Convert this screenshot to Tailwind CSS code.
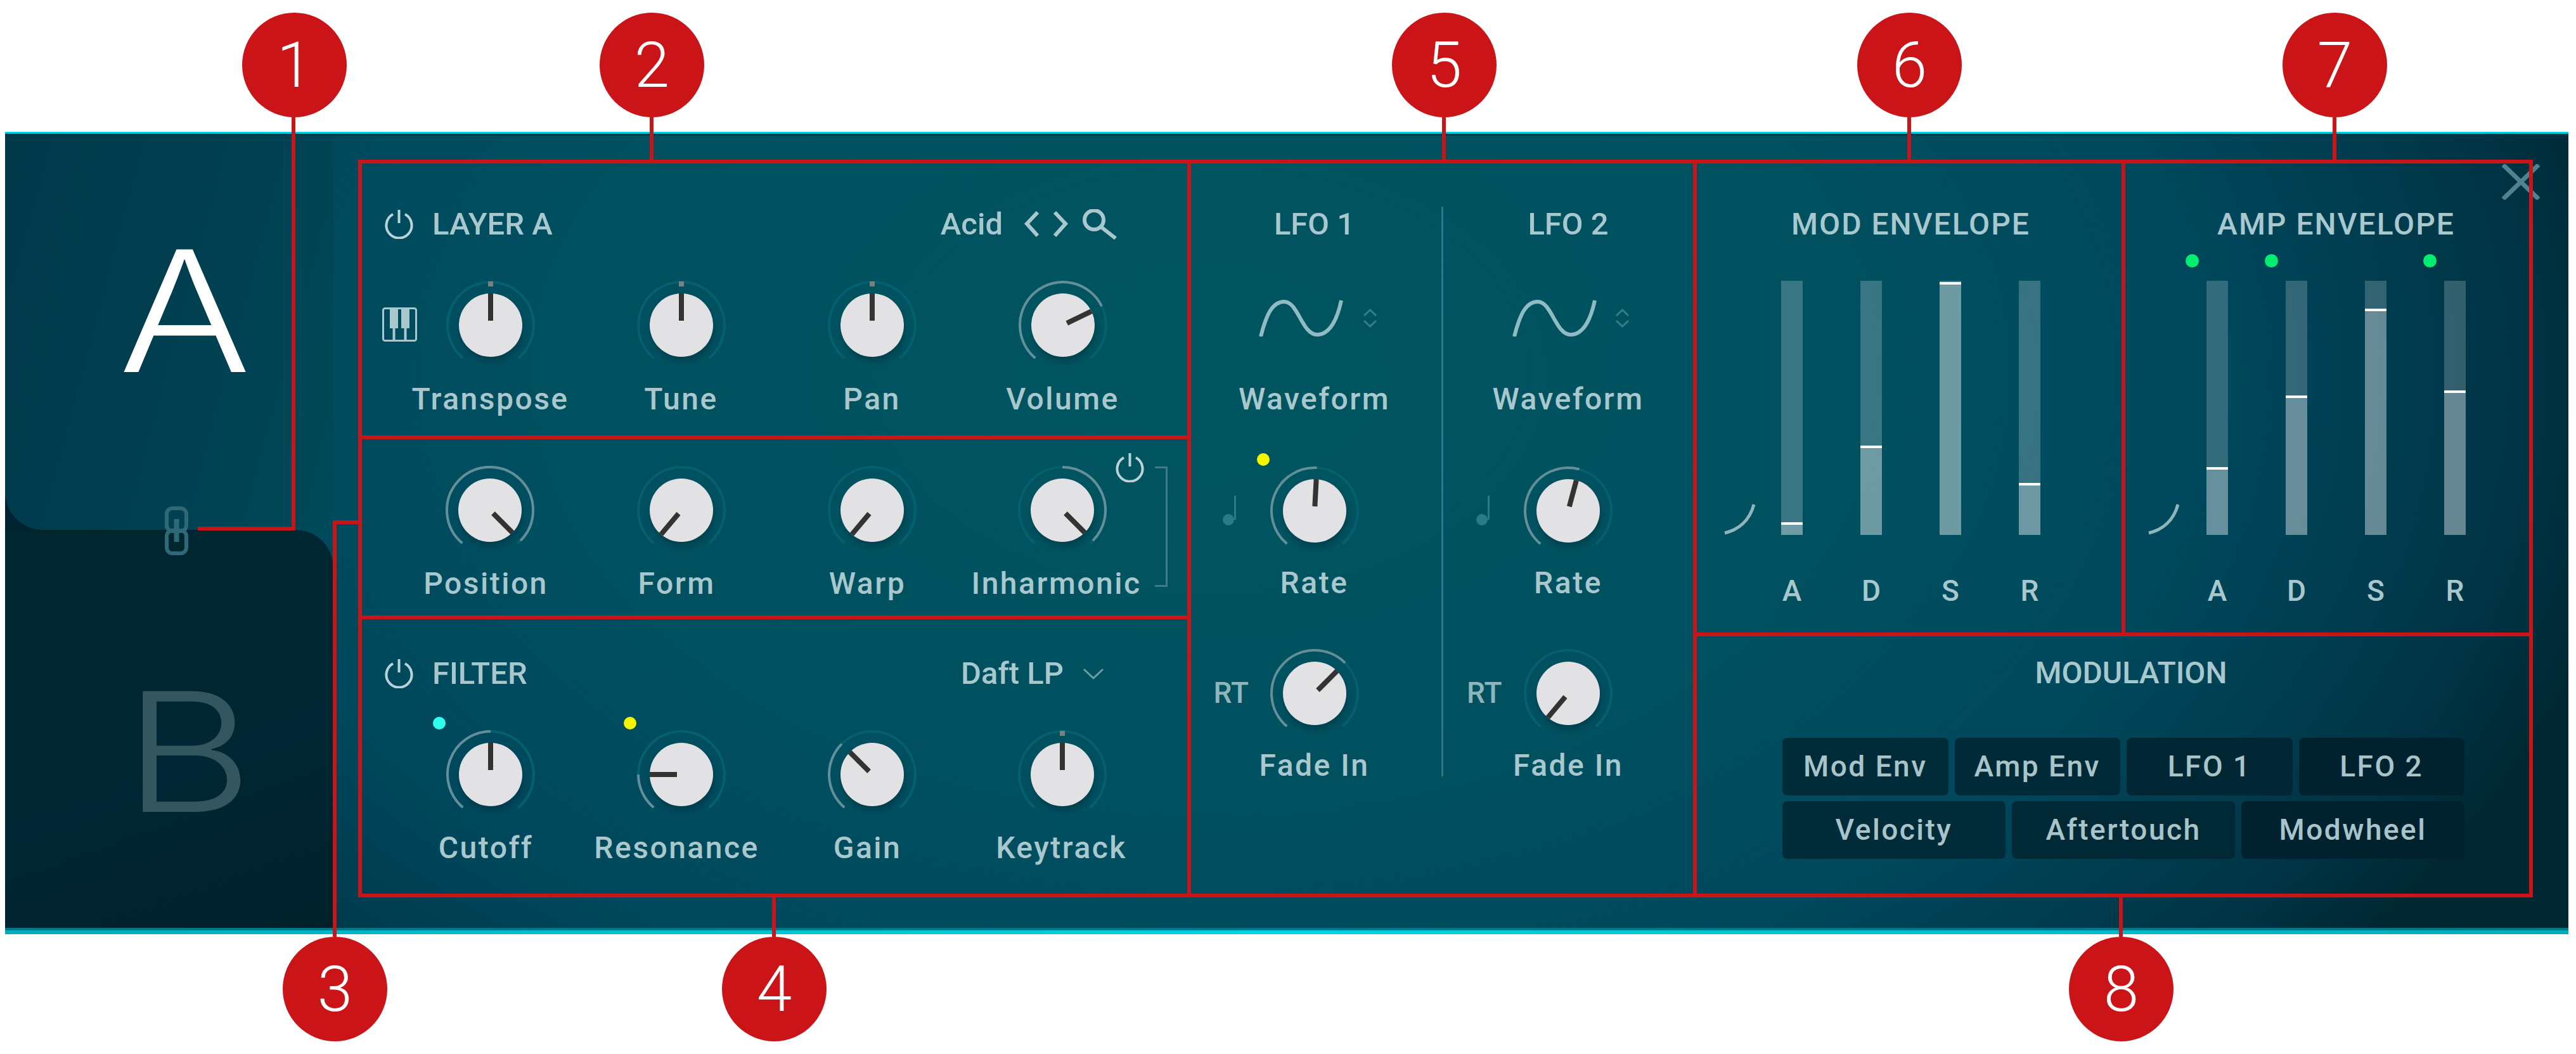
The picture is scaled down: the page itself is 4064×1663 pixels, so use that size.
<!DOCTYPE html>
<html lang="en">
  <head>
    <meta charset="UTF-8" />
    <title>Layer panel</title>
    <script src="https://cdn.jsdelivr.net/npm/@tailwindcss/browser@4"></script>
  </head>
  <body class="bg-white font-['Roboto',sans-serif] font-medium text-[#a9c8cd]">
    <div class="relative w-[4064px] h-[1663px] overflow-hidden pt-[208px] pl-[8px]">
      <!-- Panel -->
      <div class="relative flex w-[4044px] h-[1266px] border-t-[3px] border-t-[#00cfe0] bg-[radial-gradient(ellipse_2300px_1500px_at_1900px_380px,#00555f_0%,#005060_45%,#00475c_70%,#003242_92%,#00262f_100%)]">
        <!-- Edge strips -->
        <div class="absolute inset-x-0 top-0 h-[3px] bg-[#003844] z-[5]"></div>
        <div class="absolute inset-x-0 bottom-0 z-[5]">
          <div class="h-[4px] bg-[#00788a]"></div>
          <div class="h-[6px] bg-[linear-gradient(90deg,#00acc0,#00d4e4_50%,#00acc0)]"></div>
        </div>
        <!-- Close -->
        <svg class="absolute left-[3939px] top-[48px]" width="60" height="56" viewBox="0 0 60 56" fill="none" stroke="#4f8390" stroke-width="7">
          <path d="M2 1 L58 55 M58 1 L2 55" />
        </svg>

        <!-- Left: layer tabs -->
        <div class="w-[518px] flex flex-col shrink-0">
          <div class="relative w-[518px] h-[625px]">
            <div class="absolute left-0 bottom-0 w-[70px] h-[70px] bg-[#00242f]"></div>
            <div class="absolute inset-0 rounded-bl-[60px] bg-[linear-gradient(105deg,#00384a_0%,#003f50_50%,#004a5a_100%)] flex justify-center">
              <span class="mt-[119px] ml-[50px] scale-x-[1.17] text-[266px] leading-[320px] font-light text-white font-['Inter',sans-serif]">A</span>
            </div>
            <svg class="absolute left-[252px] top-[588px] z-10" width="37" height="77" viewBox="0 0 37 77" fill="none" stroke="#2f6877" stroke-width="6">
              <rect x="3" y="3" width="31" height="36" rx="9" />
              <rect x="3" y="38" width="31" height="36" rx="9" />
              <path d="M18.5 20 L18.5 56" stroke-width="8" />
            </svg>
          </div>
          <div class="flex-1 rounded-tr-[60px] bg-[linear-gradient(160deg,#00262f_0%,#002733_60%,#001f29_100%)] flex justify-center">
            <span class="mt-[190px] ml-[60px] scale-x-[1.2] text-[262px] leading-[320px] font-light text-[#33565f] font-['Inter',sans-serif]">B</span>
          </div>
        </div>

        <!-- Sections -->
        <div class="relative z-10 ml-[39px] mt-[41px] flex w-[3431px] h-[1164px] border-[6px] border-[#ca1417]">
          <!-- Layer, oscillator, filter -->
          <div class="w-[1308px] border-r-[6px] border-[#ca1417] flex flex-col shrink-0">
            <section class="h-[435px] border-b-[6px] border-[#ca1417] pt-[72px]">
              <div class="flex items-center h-[47px] pl-[36px] pr-[110px]">
                <svg data-power width="45" height="47"></svg>
                <span class="ml-[30px] text-[49px] leading-[47px]">LAYER A</span>
                <span class="ml-auto text-[49px] leading-[47px]">Acid</span>
                <svg class="ml-[33px]" width="71" height="44" viewBox="0 0 71 44" fill="none" stroke="#a9c8cd" stroke-width="6">
                  <path d="M22 3 L5 21 L22 40 M49 3 L66 21 L49 40" />
                </svg>
                <svg class="ml-[21px]" width="56" height="48" viewBox="0 0 56 48" fill="none" stroke="#a9c8cd" stroke-width="6">
                  <circle cx="19" cy="17" r="15" />
                  <path d="M30 28 L53 46" />
                </svg>
              </div>
              <div class="grid grid-cols-4 w-[1204px] ml-[52px] mt-[61px] justify-items-center">
                <div class="flex flex-col items-center">
                  <div class="relative">
                    <svg class="absolute left-[-96px] top-[47px]" width="55" height="54" viewBox="0 0 55 54" fill="none" stroke="#a9c8cd" stroke-width="3">
                      <rect x="1.5" y="1.5" width="52" height="51" rx="3" />
                      <path d="M18.500 30 L18.500 52 M36.500 30 L36.500 52" stroke-width="4" />
                      <path d="M12 2 H25 V33 H12 Z M30 2 H43 V33 H30 Z" fill="#a9c8cd" stroke="none" />
                    </svg>
                    <svg data-knob="0" data-bipolar width="150" height="150"></svg>
                  </div>
                  <span class="mt-[14px] text-[48px] leading-[56px] tracking-[2.5px]">Transpose</span>
                </div>
                <div class="flex flex-col items-center">
                  <svg data-knob="0" data-bipolar width="150" height="150"></svg>
                  <span class="mt-[14px] text-[48px] leading-[56px] tracking-[2.5px]">Tune</span>
                </div>
                <div class="flex flex-col items-center">
                  <svg data-knob="0" data-bipolar width="150" height="150"></svg>
                  <span class="mt-[14px] text-[48px] leading-[56px] tracking-[2.5px]">Pan</span>
                </div>
                <div class="flex flex-col items-center">
                  <svg data-knob="64" width="150" height="150"></svg>
                  <span class="mt-[14px] text-[48px] leading-[56px] tracking-[2.5px]">Volume</span>
                </div>
              </div>
            </section>

            <section class="relative h-[284px] border-b-[6px] border-[#ca1417] pt-[37px]">
              <div class="grid grid-cols-4 w-[1204px] ml-[52px] justify-items-center">
                <div class="flex flex-col items-center">
                  <svg data-knob="135" width="150" height="150"></svg>
                  <span class="mt-[13px] -ml-[14px] text-[48px] leading-[56px] tracking-[2.5px]">Position</span>
                </div>
                <div class="flex flex-col items-center">
                  <svg data-knob="-140" width="150" height="150"></svg>
                  <span class="mt-[13px] -ml-[14px] text-[48px] leading-[56px] tracking-[2.5px]">Form</span>
                </div>
                <div class="flex flex-col items-center">
                  <svg data-knob="-140" width="150" height="150"></svg>
                  <span class="mt-[13px] -ml-[14px] text-[48px] leading-[56px] tracking-[2.5px]">Warp</span>
                </div>
                <div class="flex flex-col items-center">
                  <svg data-knob="135" data-bipolar width="150" height="150"></svg>
                  <span class="mt-[13px] -ml-[20px] text-[48px] leading-[56px] tracking-[2.5px]">Inharmonic</span>
                </div>
              </div>
              <svg data-power class="absolute left-[1189px] top-[21px]" width="45" height="47"></svg>
              <div class="absolute left-[1251px] top-[43px] w-[20px] h-[190px] border-t-[3px] border-r-[3px] border-b-[3px] border-[#3f7a88]"></div>
            </section>

            <section class="flex-1 pt-[62px]">
              <div class="flex items-center h-[47px] pl-[36px] pr-[131px]">
                <svg data-power width="45" height="47"></svg>
                <span class="ml-[30px] text-[49px] leading-[47px]">FILTER</span>
                <span class="ml-auto text-[49px] leading-[47px]">Daft LP</span>
                <svg class="ml-[30px]" width="34" height="20" viewBox="0 0 34 20" fill="none" stroke="#6f9da6" stroke-width="3">
                  <path d="M2 3 L17 17 L32 3" />
                </svg>
              </div>
              <div class="grid grid-cols-4 w-[1204px] ml-[52px] mt-[61px] justify-items-center">
                <div class="flex flex-col items-center">
                  <div class="relative">
                    <span class="absolute -left-4 -top-4 w-5 h-5 rounded-full bg-[#2cfff0]"></span>
                    <svg data-knob="0" width="150" height="150"></svg>
                  </div>
                  <span class="mt-[13px] -ml-[14px] text-[48px] leading-[56px] tracking-[2.5px]">Cutoff</span>
                </div>
                <div class="flex flex-col items-center">
                  <div class="relative">
                    <span class="absolute -left-4 -top-4 w-5 h-5 rounded-full bg-[#f5f500]"></span>
                    <svg data-knob="-90" width="150" height="150"></svg>
                  </div>
                  <span class="mt-[13px] -ml-[14px] text-[48px] leading-[56px] tracking-[2.5px]">Resonance</span>
                </div>
                <div class="flex flex-col items-center">
                  <svg data-knob="-45" width="150" height="150"></svg>
                  <span class="mt-[13px] -ml-[14px] text-[48px] leading-[56px] tracking-[2.5px]">Gain</span>
                </div>
                <div class="flex flex-col items-center">
                  <svg data-knob="0" data-bipolar width="150" height="150"></svg>
                  <span class="mt-[13px] -ml-[4px] text-[48px] leading-[56px] tracking-[2.5px]">Keytrack</span>
                </div>
              </div>
            </section>
          </div>

          <!-- LFOs -->
          <div class="w-[798px] border-r-[6px] border-[#ca1417] flex shrink-0">
            <section class="w-[395px] pt-[72px] flex flex-col items-center pr-[6px]">
              <span class="text-[49px] leading-[47px]">LFO 1</span>
              <div class="relative mt-[96px] h-[58px] -ml-[42px]">
                <svg data-sine width="133" height="58"></svg>
                <svg data-stepper class="absolute left-[163px] top-[13px]" width="25" height="32"></svg>
              </div>
              <span class="mt-[71px] text-[48px] leading-[56px] tracking-[2.5px]">Waveform</span>
              <div class="relative mt-[73px]">
                <span class="absolute -left-4 -top-4 w-5 h-5 rounded-full bg-[#f5f500]"></span>
                <svg data-note class="absolute left-[-70px] top-[51px]" width="21" height="47"></svg>
                <svg data-knob="3" width="150" height="150"></svg>
              </div>
              <span class="mt-[11px] text-[48px] leading-[56px] tracking-[2.5px]">Rate</span>
              <div class="relative mt-[71px]">
                <span class="absolute left-[-84px] top-[51px] text-[46px] leading-[46px] text-[#8fb5bc]">RT</span>
                <svg data-knob="45" width="150" height="150"></svg>
              </div>
              <span class="mt-[11px] text-[48px] leading-[56px] tracking-[2.5px]">Fade In</span>
            </section>
            <div class="w-[3px] h-[899px] mt-[68px] bg-[#2d7888]"></div>
            <section class="w-[394px] pt-[72px] flex flex-col items-center">
              <span class="text-[49px] leading-[47px]">LFO 2</span>
              <div class="relative mt-[96px] h-[58px] -ml-[44px]">
                <svg data-sine width="133" height="58"></svg>
                <svg data-stepper class="absolute left-[161px] top-[13px]" width="25" height="32"></svg>
              </div>
              <span class="mt-[71px] text-[48px] leading-[56px] tracking-[2.5px]">Waveform</span>
              <div class="relative mt-[73px]">
                <svg data-note class="absolute left-[-70px] top-[51px]" width="21" height="47"></svg>
                <svg data-knob="15" width="150" height="150"></svg>
              </div>
              <span class="mt-[11px] text-[48px] leading-[56px] tracking-[2.5px]">Rate</span>
              <div class="relative mt-[71px]">
                <span class="absolute left-[-85px] top-[51px] text-[46px] leading-[46px] text-[#8fb5bc]">RT</span>
                <svg data-knob="-140" width="150" height="150"></svg>
              </div>
              <span class="mt-[11px] text-[48px] leading-[56px] tracking-[2.5px]">Fade In</span>
            </section>
          </div>

          <!-- Envelopes + modulation -->
          <div class="flex-1 flex flex-col">
            <div class="flex h-[746px] border-b-[6px] border-[#ca1417]">
              <section class="w-[676px] border-r-[6px] border-[#ca1417] pt-[72px] pl-[133px]">
                <div class="w-[409px] text-center text-[48px] leading-[47px] tracking-[2px] whitespace-nowrap">MOD ENVELOPE</div>
                <div class="w-[409px] h-[401px] mt-[66px] flex justify-between">
                  <div class="relative w-[34px] h-full bg-white/22">
                    <svg data-curve class="absolute left-[-90px] top-[351px]" width="50" height="50"></svg>
                    <div class="absolute inset-x-0 bottom-0 h-[20px] bg-white/27 border-t-[4px] border-white"></div>
                  </div>
                  <div class="relative w-[34px] h-full bg-white/22">
                    <div class="absolute inset-x-0 bottom-0 h-[141px] bg-white/27 border-t-[4px] border-white"></div>
                  </div>
                  <div class="relative w-[34px] h-full bg-white/22">
                    <div class="absolute inset-x-0 bottom-0 h-[399px] bg-white/27 border-t-[4px] border-white"></div>
                  </div>
                  <div class="relative w-[34px] h-full bg-white/22">
                    <div class="absolute inset-x-0 bottom-0 h-[82px] bg-white/27 border-t-[4px] border-white"></div>
                  </div>
                </div>
                <div class="w-[409px] mt-[63px] flex justify-between text-[46px] leading-[50px] text-center">
                  <span class="w-[34px]">A</span><span class="w-[34px]">D</span><span class="w-[34px]">S</span><span class="w-[34px]">R</span>
                </div>
              </section>
              <section class="flex-1 pt-[72px] pl-[128px]">
                <div class="w-[409px] text-center text-[48px] leading-[47px] tracking-[2px] whitespace-nowrap">AMP ENVELOPE</div>
                <div class="w-[409px] h-[401px] mt-[66px] flex justify-between">
                  <div class="relative w-[34px] h-full bg-white/20">
                    <span class="absolute left-[-33px] top-[-42px] w-[21px] h-[21px] rounded-full bg-[#00ee70]"></span>
                    <svg data-curve class="absolute left-[-92px] top-[351px]" width="50" height="50"></svg>
                    <div class="absolute inset-x-0 bottom-0 h-[107px] bg-white/25 border-t-[4px] border-white"></div>
                  </div>
                  <div class="relative w-[34px] h-full bg-white/20">
                    <span class="absolute left-[-33px] top-[-42px] w-[21px] h-[21px] rounded-full bg-[#00ee70]"></span>
                    <div class="absolute inset-x-0 bottom-0 h-[220px] bg-white/25 border-t-[4px] border-white"></div>
                  </div>
                  <div class="relative w-[34px] h-full bg-white/20">
                    <div class="absolute inset-x-0 bottom-0 h-[357px] bg-white/25 border-t-[4px] border-white"></div>
                  </div>
                  <div class="relative w-[34px] h-full bg-white/20">
                    <span class="absolute left-[-33px] top-[-42px] w-[21px] h-[21px] rounded-full bg-[#00ee70]"></span>
                    <div class="absolute inset-x-0 bottom-0 h-[228px] bg-white/25 border-t-[4px] border-white"></div>
                  </div>
                </div>
                <div class="w-[409px] mt-[63px] flex justify-between text-[46px] leading-[50px] text-center">
                  <span class="w-[34px]">A</span><span class="w-[34px]">D</span><span class="w-[34px]">S</span><span class="w-[34px]">R</span>
                </div>
              </section>
            </div>
            <section class="flex-1 pt-[33px] pl-[135px]">
              <div class="w-[1076px] pl-[24px] text-center text-[48px] leading-[50px]">MODULATION</div>
              <div class="w-[1076px] mt-[77px] flex flex-col gap-[9px] text-[46px] tracking-[2.5px] text-[#a9c4c9]">
                <div class="grid grid-cols-4 gap-[10px] h-[91px]">
                  <div class="rounded-lg bg-[#002c3a] flex items-center justify-center">Mod Env</div>
                  <div class="rounded-lg bg-[#002a38] flex items-center justify-center">Amp Env</div>
                  <div class="rounded-lg bg-[#002733] flex items-center justify-center">LFO 1</div>
                  <div class="rounded-lg bg-[#00222e] flex items-center justify-center">LFO 2</div>
                </div>
                <div class="grid grid-cols-3 gap-[10px] h-[91px]">
                  <div class="rounded-lg bg-[#002c3a] flex items-center justify-center">Velocity</div>
                  <div class="rounded-lg bg-[#002935] flex items-center justify-center">Aftertouch</div>
                  <div class="rounded-lg bg-[#00222e] flex items-center justify-center">Modwheel</div>
                </div>
              </div>
            </section>
          </div>
        </div>
      </div>

      <!-- Callout lines -->
      <div class="absolute z-20 left-[460px] top-[185px] w-[6px] h-[652px] bg-[#ca1417]"></div>
      <div class="absolute z-20 left-[312px] top-[831px] w-[154px] h-[6px] bg-[#ca1417]"></div>
      <div class="absolute z-20 left-[1025px] top-[185px] w-[6px] h-[67px] bg-[#ca1417]"></div>
      <div class="absolute z-20 left-[525px] top-[821px] w-[6px] h-[657px] bg-[#ca1417]"></div>
      <div class="absolute z-20 left-[525px] top-[821px] w-[41px] h-[6px] bg-[#ca1417]"></div>
      <div class="absolute z-20 left-[1218px] top-[1416px] w-[6px] h-[62px] bg-[#ca1417]"></div>
      <div class="absolute z-20 left-[2275px] top-[185px] w-[6px] h-[67px] bg-[#ca1417]"></div>
      <div class="absolute z-20 left-[3009px] top-[185px] w-[6px] h-[67px] bg-[#ca1417]"></div>
      <div class="absolute z-20 left-[3680px] top-[185px] w-[6px] h-[67px] bg-[#ca1417]"></div>
      <div class="absolute z-20 left-[3343px] top-[1416px] w-[6px] h-[62px] bg-[#ca1417]"></div>

      <!-- Callout badges -->
      <div class="absolute z-30 left-[382px] top-[20px] w-[165px] h-[165px] rounded-full bg-[#ca1417] flex items-center justify-center text-white text-[100px] font-light">1</div>
      <div class="absolute z-30 left-[946px] top-[20px] w-[165px] h-[165px] rounded-full bg-[#ca1417] flex items-center justify-center text-white text-[100px] font-light">2</div>
      <div class="absolute z-30 left-[446px] top-[1478px] w-[165px] h-[165px] rounded-full bg-[#ca1417] flex items-center justify-center text-white text-[100px] font-light">3</div>
      <div class="absolute z-30 left-[1139px] top-[1478px] w-[165px] h-[165px] rounded-full bg-[#ca1417] flex items-center justify-center text-white text-[100px] font-light">4</div>
      <div class="absolute z-30 left-[2196px] top-[20px] w-[165px] h-[165px] rounded-full bg-[#ca1417] flex items-center justify-center text-white text-[100px] font-light">5</div>
      <div class="absolute z-30 left-[2930px] top-[20px] w-[165px] h-[165px] rounded-full bg-[#ca1417] flex items-center justify-center text-white text-[100px] font-light">6</div>
      <div class="absolute z-30 left-[3601px] top-[20px] w-[165px] h-[165px] rounded-full bg-[#ca1417] flex items-center justify-center text-white text-[100px] font-light">7</div>
      <div class="absolute z-30 left-[3264px] top-[1478px] w-[165px] h-[165px] rounded-full bg-[#ca1417] flex items-center justify-center text-white text-[100px] font-light">8</div>
    </div>

    <script>
      const START = -140;

      function polar(deg, r) {
        const rad = (deg * Math.PI) / 180;
        return [75 + r * Math.sin(rad), 75 - r * Math.cos(rad)];
      }

      function arc(from, to, r) {
        const [x1, y1] = polar(from, r);
        const [x2, y2] = polar(to, r);
        const large = to - from > 180 ? 1 : 0;
        return `M${x1} ${y1} A${r} ${r} 0 ${large} 1 ${x2} ${y2}`;
      }

      // Knobs
      document.querySelectorAll("[data-knob]").forEach((el) => {
        const angle = Number(el.dataset.knob);
        const bipolar = el.hasAttribute("data-bipolar");
        const from = bipolar ? 0 : START;
        const lit =
          angle > from
            ? `<path d="${arc(from, angle, 68)}" fill="none" stroke="#648f98" stroke-width="4"/>`
            : "";
        const tick =
          bipolar && angle === 0
            ? `<rect x="71" y="6" width="8" height="8" fill="#7a7f82"/>`
            : "";
        el.setAttribute("viewBox", "0 0 150 150");
        el.innerHTML = `
          <path d="${arc(START, 140, 68)}" fill="none" stroke="#04606f" stroke-width="4"/>
          ${lit}${tick}
          <circle cx="77" cy="83" r="50" fill="#00202c" opacity="0.3" class="blur-[4px]"/>
          <circle cx="75" cy="75" r="50" fill="#e2e2e5"/>
          <rect x="71" y="25" width="8" height="43" fill="#333" transform="rotate(${angle} 75 75)"/>`;
      });

      // Power icons
      document.querySelectorAll("[data-power]").forEach((el) => {
        el.setAttribute("viewBox", "0 0 45 47");
        el.innerHTML = `
          <path d="M13 8 A20 20 0 1 0 32 8" fill="none" stroke="#b9d3d8" stroke-width="4"/>
          <path d="M22.500 1 V22" fill="none" stroke="#b9d3d8" stroke-width="4"/>`;
      });

      // LFO shapes
      document.querySelectorAll("[data-sine]").forEach((el) => {
        el.setAttribute("viewBox", "0 0 133 58");
        el.innerHTML = `<path d="M3 58 C12 22 22 3 40 3 C62 3 68 55 92 55 C112 55 124 30 130 1" fill="none" stroke="#8fbcc3" stroke-width="6"/>`;
      });
      document.querySelectorAll("[data-stepper]").forEach((el) => {
        el.setAttribute("viewBox", "0 0 25 32");
        el.innerHTML = `<path d="M3 12 L12.500 3 L22 12 M3 20 L12.500 29 L22 20" fill="none" stroke="#2f8090" stroke-width="3"/>`;
      });
      document.querySelectorAll("[data-note]").forEach((el) => {
        el.setAttribute("viewBox", "0 0 21 47");
        el.innerHTML = `<circle cx="9" cy="38" r="9" fill="#2a7b8a"/><path d="M19.500 0 V38" stroke="#2a7b8a" stroke-width="3"/>`;
      });
      document.querySelectorAll("[data-curve]").forEach((el) => {
        el.setAttribute("viewBox", "0 0 50 50");
        el.innerHTML = `<path d="M1 47 C22 42 40 28 47 2" fill="none" stroke="#8fb5bc" stroke-width="5"/>`;
      });
    </script>
  </body>
</html>
